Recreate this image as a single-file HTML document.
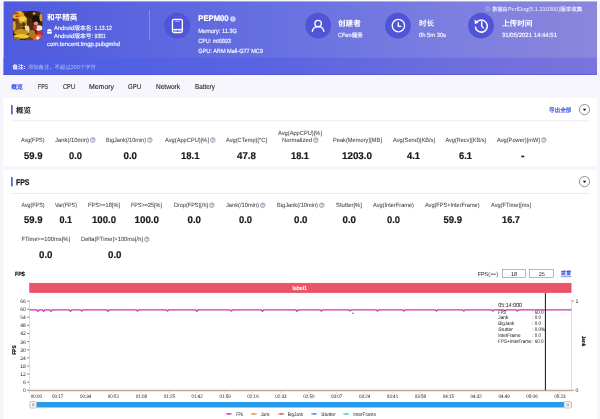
<!DOCTYPE html>
<html><head><meta charset="utf-8"><title>PerfDog</title>
<style>
html,body{margin:0;padding:0}
body{width:600px;height:419px;overflow:hidden;background:#f5f5fb;font-family:"Liberation Sans","Noto Sans CJK SC",sans-serif}
svg{display:block;overflow:visible}
#root{position:absolute;left:0;top:0;will-change:transform;font-family:"Liberation Sans","Noto Sans CJK SC",sans-serif}
</style></head><body>
<svg id="root" width="600" height="419" viewBox="0 0 600 419" text-rendering="geometricPrecision">
<svg x="0" y="0" width="600" height="419" viewBox="0 0 600 419"><defs><linearGradient id="hg" x1="0" x2="1" y1="0" y2="0"><stop offset="0" stop-color="#4f5ade"/><stop offset="0.45" stop-color="#6670e0"/><stop offset="0.75" stop-color="#7c7ee0"/><stop offset="1" stop-color="#8c86dc"/></linearGradient><linearGradient id="ng" x1="0" x2="1" y1="0" y2="0"><stop offset="0" stop-color="#4c5de4"/><stop offset="0.45" stop-color="#5a64e2"/><stop offset="0.75" stop-color="#6c6ede"/><stop offset="1" stop-color="#7a74dc"/></linearGradient><clipPath id="ic"><rect x="0" y="0" width="29.8" height="29.3" rx="6.2"/></clipPath><filter id="ib" x="-20%" y="-20%" width="140%" height="140%"><feGaussianBlur stdDeviation="0.7"/></filter></defs><rect x="0" y="0" width="600" height="2" fill="#fafafd"/><rect x="3.6" y="1.4" width="593.4" height="73.6" fill="url(#hg)"/><rect x="3.6" y="57.8" width="593.4" height="17.2" fill="url(#ng)"/><rect x="3.6" y="73.9" width="593.4" height="1.1" fill="#4a4adc" fill-opacity="0.45"/><rect x="3.6" y="75" width="593.4" height="22.9" fill="#f6f6fc"/><rect x="3.4" y="97.6" width="593.6" height="68.7" fill="#fff"/><rect x="3.4" y="169.6" width="593.6" height="250" fill="#fff"/><rect x="11" y="120.4" width="579" height="0.8" fill="#e6e6ee"/><rect x="11" y="193.1" width="579" height="0.8" fill="#e6e6ee"/><rect x="11.1" y="105.1" width="1.55" height="9.2" fill="#3350e6"/><rect x="11.1" y="177.1" width="1.55" height="9.2" fill="#3350e6"/><rect x="149.2" y="10" width="0.8" height="30" fill="#8f95ea"/><circle cx="177.2" cy="25.7" r="12.9" fill="#5054d6"/><circle cx="318.2" cy="25.7" r="12.9" fill="#5054d6"/><circle cx="397.9" cy="25.7" r="12.9" fill="#5054d6"/><circle cx="481" cy="25.7" r="12.9" fill="#5054d6"/><g transform="translate(12.6 10.9)" clip-path="url(#ic)"><rect x="0" y="0" width="30" height="29.4" fill="#4a2a12"/><g filter="url(#ib)"><ellipse cx="5" cy="4" rx="6.5" ry="4.5" fill="#e2aa1c"/><ellipse cx="3" cy="2.6" rx="3.2" ry="1.0" fill="#c8301c"/><ellipse cx="6.5" cy="5.4" rx="3.6" ry="0.9" fill="#c8301c"/><ellipse cx="9.5" cy="11" rx="6" ry="7" fill="#d8a222"/><ellipse cx="4" cy="11" rx="2.2" ry="3.4" fill="#6a4212"/><ellipse cx="6" cy="16" rx="3.2" ry="4.5" fill="#7a4e16"/><ellipse cx="10" cy="8" rx="3.2" ry="2.4" fill="#f4d44c"/><ellipse cx="11" cy="13.5" rx="2.2" ry="2.2" fill="#5a3414"/><ellipse cx="1.6" cy="15" rx="1.6" ry="5" fill="#dca21c"/><ellipse cx="18.5" cy="4" rx="6" ry="4.2" fill="#341a0e"/><ellipse cx="21.5" cy="2.6" rx="1.5" ry="1.3" fill="#d8a040"/><ellipse cx="17" cy="11.5" rx="3" ry="4.5" fill="#4e2c12"/><ellipse cx="24" cy="8.6" rx="4.6" ry="4" fill="#1c1010"/><ellipse cx="23.4" cy="12.6" rx="2.1" ry="2.1" fill="#d8987c"/><ellipse cx="28.6" cy="6.5" rx="1.7" ry="4" fill="#d4a028"/><ellipse cx="28.8" cy="13" rx="1.4" ry="2.5" fill="#3a2014"/><ellipse cx="26.4" cy="17.2" rx="3.6" ry="2.8" fill="#f2e6e6"/><ellipse cx="22.4" cy="16.6" rx="2.0" ry="2.4" fill="#c8242a"/><ellipse cx="27.6" cy="22" rx="3" ry="2.4" fill="#d4282a"/><ellipse cx="14.2" cy="18.5" rx="2.8" ry="4" fill="#ecdca4"/><ellipse cx="11" cy="18" rx="1.6" ry="2.6" fill="#4a2c12"/><ellipse cx="8.5" cy="21.4" rx="7" ry="3.2" fill="#c8921e"/><ellipse cx="9" cy="25.4" rx="7.8" ry="2.3" fill="#f2c826"/><ellipse cx="3.5" cy="27.8" rx="4" ry="1.8" fill="#a87014"/><ellipse cx="19.5" cy="23" rx="3.4" ry="4" fill="#a87a26"/><ellipse cx="25" cy="27" rx="5.6" ry="3.6" fill="#ee5a22"/><ellipse cx="25.2" cy="27" rx="1.7" ry="1.7" fill="#ffeadc"/><ellipse cx="16.5" cy="28.4" rx="4" ry="1.5" fill="#6e4214"/></g></g><rect x="29.6" y="283.2" width="541.5" height="9.5" fill="#ea5466" stroke="#e43c58" stroke-width="0.5"/></svg>
<text x="47.00" y="20.09" font-size="7.60" fill="#ffffff" textLength="30.40" lengthAdjust="spacingAndGlyphs" font-weight="700" font-family="'Liberation Sans','Noto Sans CJK SC',sans-serif">和平精英</text>
<svg x="46.9" y="28.7" width="5.1" height="5.3" viewBox="0 0 10 10"><path d="M0.4 4.5 A4.6 4.3 0 0 1 9.6 4.5 Z M0.4 5.4 H9.6 V8.2 Q9.6 9.7 8.1 9.7 H1.9 Q0.4 9.7 0.4 8.2 Z" fill="#fff"/></svg>
<text x="54.00" y="30.15" font-size="6.00" fill="#f6f6ff" textLength="20.00" lengthAdjust="spacingAndGlyphs" stroke="#f6f6ff" stroke-width="0.17">Android</text>
<text x="74.20" y="30.20" font-size="5.80" fill="#f6f6ff" textLength="17.30" lengthAdjust="spacingAndGlyphs" stroke="#f6f6ff" stroke-width="0.15" font-family="'Liberation Sans','Noto Sans CJK SC',sans-serif">版本名</text>
<text x="91.70" y="30.15" font-size="6.00" fill="#f6f6ff" textLength="20.30" lengthAdjust="spacingAndGlyphs" stroke="#f6f6ff" stroke-width="0.17">: 1.13.12</text>
<text x="54.00" y="37.95" font-size="6.00" fill="#f6f6ff" textLength="20.00" lengthAdjust="spacingAndGlyphs" stroke="#f6f6ff" stroke-width="0.17">Android</text>
<text x="74.20" y="38.00" font-size="5.80" fill="#f6f6ff" textLength="17.30" lengthAdjust="spacingAndGlyphs" stroke="#f6f6ff" stroke-width="0.15" font-family="'Liberation Sans','Noto Sans CJK SC',sans-serif">版本号</text>
<text x="91.70" y="37.95" font-size="6.00" fill="#f6f6ff" textLength="14.30" lengthAdjust="spacingAndGlyphs" stroke="#f6f6ff" stroke-width="0.17">: 9351</text>
<text x="47.00" y="46.35" font-size="6.00" fill="#f6f6ff" textLength="73.00" lengthAdjust="spacingAndGlyphs" stroke="#f6f6ff" stroke-width="0.17">com.tencent.tmgp.pubgmhd</text>
<text x="12.40" y="68.73" font-size="5.60" fill="#ffffff" textLength="11.00" lengthAdjust="spacingAndGlyphs" font-weight="700" font-family="'Liberation Sans','Noto Sans CJK SC',sans-serif">备注</text>
<text x="23.60" y="68.80" font-size="5.60" fill="#ffffff" textLength="1.87" lengthAdjust="spacingAndGlyphs" font-weight="700" stroke="#ffffff" stroke-width="0.17">:</text>
<text x="28.00" y="68.65" font-size="5.40" fill="#b4baf5" textLength="42.50" lengthAdjust="spacingAndGlyphs" font-family="'Liberation Sans','Noto Sans CJK SC',sans-serif">添加备注，不超过</text>
<text x="70.50" y="68.90" font-size="5.60" fill="#b4baf5" textLength="9.34" lengthAdjust="spacingAndGlyphs">200</text>
<text x="80.04" y="68.65" font-size="5.40" fill="#b4baf5" textLength="16.00" lengthAdjust="spacingAndGlyphs" font-family="'Liberation Sans','Noto Sans CJK SC',sans-serif">个字符</text>
<svg x="171.4" y="18.4" width="12" height="15" viewBox="0 0 12 15"><rect x="1.05" y="0.95" width="9.9" height="13.2" rx="1.7" fill="none" stroke="#fff" stroke-width="1.35"/><path d="M3.6 2.75 H8.4" stroke="#dfe1fb" stroke-width="0.8"/><path d="M1 11.0 H11" stroke="#fff" stroke-width="1.1"/><path d="M2.6 12.55 H5.5 M6.5 12.55 H9.4" stroke="#fff" stroke-width="0.9"/></svg>
<text x="198.30" y="21.17" font-size="8.30" fill="#ffffff" textLength="30.30" lengthAdjust="spacingAndGlyphs" font-weight="700" stroke="#ffffff" stroke-width="0.20">PEPM00</text>
<svg x="230.1" y="16.1" width="5.6" height="5.6" viewBox="0 0 10 10"><circle cx="5" cy="5" r="4.9" fill="#cfd1f8"/><path d="M5 4.4 V7.6" stroke="#6f76de" stroke-width="1.1"/><circle cx="5" cy="2.8" r=".7" fill="#6f76de"/></svg>
<text x="198.30" y="32.55" font-size="6.00" fill="#f6f6ff" textLength="38.70" lengthAdjust="spacingAndGlyphs" stroke="#f6f6ff" stroke-width="0.17">Memory: 11.3G</text>
<text x="198.30" y="42.85" font-size="6.00" fill="#f6f6ff" textLength="32.70" lengthAdjust="spacingAndGlyphs" stroke="#f6f6ff" stroke-width="0.17">CPU: mt6893</text>
<text x="198.30" y="53.15" font-size="6.00" fill="#f6f6ff" textLength="64.70" lengthAdjust="spacingAndGlyphs" stroke="#f6f6ff" stroke-width="0.17">GPU: ARM Mali-G77 MC9</text>
<svg x="311" y="19" width="14" height="14" viewBox="0 0 14 14"><circle cx="7.1" cy="4.5" r="3.2" fill="none" stroke="#fff" stroke-width="1.35"/><path d="M1.3 12.4 Q2.2 7.6 7.1 7.6 Q12 7.6 12.9 12.4" fill="none" stroke="#fff" stroke-width="1.35" stroke-linecap="round"/></svg>
<text x="338.00" y="25.89" font-size="7.60" fill="#ffffff" textLength="22.80" lengthAdjust="spacingAndGlyphs" font-weight="700" font-family="'Liberation Sans','Noto Sans CJK SC',sans-serif">创建者</text>
<text x="338.00" y="37.35" font-size="6.00" fill="#f6f6ff" textLength="13.50" lengthAdjust="spacingAndGlyphs" stroke="#f6f6ff" stroke-width="0.17">CFan</text>
<text x="351.70" y="37.33" font-size="5.60" fill="#f6f6ff" textLength="11.20" lengthAdjust="spacingAndGlyphs" stroke="#f6f6ff" stroke-width="0.15" font-family="'Liberation Sans','Noto Sans CJK SC',sans-serif">健圣</text>
<svg x="391" y="18.6" width="15" height="15" viewBox="0 0 15 15"><circle cx="7.4" cy="7.0" r="6.2" fill="none" stroke="#fff" stroke-width="1.35"/><path d="M7.3 3.6 V7.7 H10.4" fill="none" stroke="#fff" stroke-width="1.35"/></svg>
<text x="419.00" y="25.89" font-size="7.60" fill="#ffffff" textLength="15.20" lengthAdjust="spacingAndGlyphs" font-weight="700" font-family="'Liberation Sans','Noto Sans CJK SC',sans-serif">时长</text>
<text x="419.00" y="37.35" font-size="6.00" fill="#f6f6ff" textLength="27.00" lengthAdjust="spacingAndGlyphs" stroke="#f6f6ff" stroke-width="0.17">0h 5m 30s</text>
<svg x="473" y="18" width="16" height="16" viewBox="0 0 16 16"><path d="M3.4 4.6 A6 6 0 1 1 2.3 8.6" fill="none" stroke="#fff" stroke-width="1.5"/><path d="M1.6 1.6 L5.6 4.6 L1.8 6.2 Z" fill="#fff"/><path d="M8.7 3.8 V8.0 L10.2 9.9" fill="none" stroke="#fff" stroke-width="1.4" stroke-linecap="round"/></svg>
<text x="502.00" y="26.29" font-size="7.60" fill="#ffffff" textLength="30.40" lengthAdjust="spacingAndGlyphs" font-weight="700" font-family="'Liberation Sans','Noto Sans CJK SC',sans-serif">上传时间</text>
<text x="502.00" y="37.35" font-size="6.00" fill="#f6f6ff" textLength="55.00" lengthAdjust="spacingAndGlyphs" stroke="#f6f6ff" stroke-width="0.17">31/05/2021 14:44:51</text>
<svg x="485.4" y="6.4" width="4.8" height="4.8" viewBox="0 0 10 10"><circle cx="5" cy="5" r="4.3" fill="none" stroke="#d9dbf7" stroke-width="0.9"/><path d="M5 4.3 V7.4" stroke="#d9dbf7" stroke-width="1"/><circle cx="5" cy="2.9" r=".7" fill="#d9dbf7"/></svg>
<text x="492.60" y="10.98" font-size="5.20" fill="#f2f2fe" textLength="15.00" lengthAdjust="spacingAndGlyphs" stroke="#f2f2fe" stroke-width="0.10" font-family="'Liberation Sans','Noto Sans CJK SC',sans-serif">数据由</text>
<text x="507.80" y="11.08" font-size="5.80" fill="#f2f2fe" textLength="52.20" lengthAdjust="spacingAndGlyphs">PerfDog(5.1.210300)</text>
<text x="560.20" y="11.05" font-size="5.40" fill="#f2f2fe" textLength="22.20" lengthAdjust="spacingAndGlyphs" stroke="#f2f2fe" stroke-width="0.10" font-family="'Liberation Sans','Noto Sans CJK SC',sans-serif">版本收集</text>
<text x="11.20" y="88.84" font-size="5.90" fill="#3553e2" textLength="11.60" lengthAdjust="spacingAndGlyphs" stroke="#3553e2" stroke-width="0.22" font-family="'Liberation Sans','Noto Sans CJK SC',sans-serif">概览</text>
<text x="38.00" y="89.14" font-size="7.10" fill="#2a2a2a" textLength="10.00" lengthAdjust="spacingAndGlyphs" stroke="#2a2a2a" stroke-width="0.12">FPS</text>
<text x="63.00" y="89.14" font-size="7.10" fill="#2a2a2a" textLength="12.00" lengthAdjust="spacingAndGlyphs" stroke="#2a2a2a" stroke-width="0.12">CPU</text>
<text x="89.00" y="89.14" font-size="7.10" fill="#2a2a2a" textLength="25.00" lengthAdjust="spacingAndGlyphs" stroke="#2a2a2a" stroke-width="0.12">Memory</text>
<text x="128.00" y="89.14" font-size="7.10" fill="#2a2a2a" textLength="13.00" lengthAdjust="spacingAndGlyphs" stroke="#2a2a2a" stroke-width="0.12">GPU</text>
<text x="156.00" y="89.14" font-size="7.10" fill="#2a2a2a" textLength="24.00" lengthAdjust="spacingAndGlyphs" stroke="#2a2a2a" stroke-width="0.12">Network</text>
<text x="195.00" y="89.14" font-size="7.10" fill="#2a2a2a" textLength="20.00" lengthAdjust="spacingAndGlyphs" stroke="#2a2a2a" stroke-width="0.12">Battery</text>
<text x="16.00" y="112.89" font-size="7.60" fill="#1a1a1a" textLength="15.00" lengthAdjust="spacingAndGlyphs" font-weight="700" font-family="'Liberation Sans','Noto Sans CJK SC',sans-serif">概览</text>
<text x="549.00" y="111.73" font-size="5.60" fill="#3553e2" textLength="22.40" lengthAdjust="spacingAndGlyphs" stroke="#3553e2" stroke-width="0.20" font-family="'Liberation Sans','Noto Sans CJK SC',sans-serif">导出全部</text>
<svg x="578.50" y="103.60" width="12" height="12" viewBox="0 0 12 12"><circle cx="6" cy="6" r="5.1" fill="#fff" stroke="#444" stroke-width="0.6"/><path d="M4.3 5.2 H7.7 L6 7.4 Z" fill="#111"/></svg>
<svg x="578.50" y="175.60" width="12" height="12" viewBox="0 0 12 12"><circle cx="6" cy="6" r="5.1" fill="#fff" stroke="#444" stroke-width="0.6"/><path d="M4.3 5.2 H7.7 L6 7.4 Z" fill="#111"/></svg>
<text x="21.00" y="142.15" font-size="6.00" fill="#444444" textLength="23.50" lengthAdjust="spacingAndGlyphs" stroke="#444444" stroke-width="0.05">Avg(FPS)</text>
<text x="24.00" y="158.51" font-size="9.80" fill="#1a1a1a" textLength="18.50" lengthAdjust="spacingAndGlyphs" font-weight="700" stroke="#1a1a1a" stroke-width="0.20">59.9</text>
<text x="55.00" y="142.15" font-size="6.00" fill="#444444" textLength="34.00" lengthAdjust="spacingAndGlyphs" stroke="#444444" stroke-width="0.05">Jank(/10min)</text>
<svg x="90.00" y="137.20" width="5.60" height="5.60" viewBox="0 0 12 12"><circle cx="6" cy="6" r="4.9" fill="none" stroke="#6a7a9e" stroke-width="1.5"/><path d="M4.2 4.9 Q4.2 3.1 6 3.1 Q7.8 3.1 7.8 4.6 Q7.8 5.5 6 6.3 V7.3" fill="none" stroke="#6a7a9e" stroke-width="1.4"/><circle cx="6" cy="8.9" r=".9" fill="#6a7a9e"/></svg>
<text x="69.00" y="158.51" font-size="9.80" fill="#1a1a1a" textLength="13.00" lengthAdjust="spacingAndGlyphs" font-weight="700" stroke="#1a1a1a" stroke-width="0.20">0.0</text>
<text x="106.00" y="142.15" font-size="6.00" fill="#444444" textLength="40.00" lengthAdjust="spacingAndGlyphs" stroke="#444444" stroke-width="0.05">BigJank(/10min)</text>
<svg x="147.00" y="137.20" width="5.60" height="5.60" viewBox="0 0 12 12"><circle cx="6" cy="6" r="4.9" fill="none" stroke="#6a7a9e" stroke-width="1.5"/><path d="M4.2 4.9 Q4.2 3.1 6 3.1 Q7.8 3.1 7.8 4.6 Q7.8 5.5 6 6.3 V7.3" fill="none" stroke="#6a7a9e" stroke-width="1.4"/><circle cx="6" cy="8.9" r=".9" fill="#6a7a9e"/></svg>
<text x="123.50" y="158.51" font-size="9.80" fill="#1a1a1a" textLength="13.50" lengthAdjust="spacingAndGlyphs" font-weight="700" stroke="#1a1a1a" stroke-width="0.20">0.0</text>
<text x="165.00" y="142.15" font-size="6.00" fill="#444444" textLength="44.00" lengthAdjust="spacingAndGlyphs" stroke="#444444" stroke-width="0.05">Avg(AppCPU)[%]</text>
<svg x="210.00" y="137.20" width="5.60" height="5.60" viewBox="0 0 12 12"><circle cx="6" cy="6" r="4.9" fill="none" stroke="#6a7a9e" stroke-width="1.5"/><path d="M4.2 4.9 Q4.2 3.1 6 3.1 Q7.8 3.1 7.8 4.6 Q7.8 5.5 6 6.3 V7.3" fill="none" stroke="#6a7a9e" stroke-width="1.4"/><circle cx="6" cy="8.9" r=".9" fill="#6a7a9e"/></svg>
<text x="181.00" y="158.51" font-size="9.80" fill="#1a1a1a" textLength="18.50" lengthAdjust="spacingAndGlyphs" font-weight="700" stroke="#1a1a1a" stroke-width="0.20">18.1</text>
<text x="226.00" y="142.15" font-size="6.00" fill="#444444" textLength="41.00" lengthAdjust="spacingAndGlyphs" stroke="#444444" stroke-width="0.05">Avg(CTemp)[°C]</text>
<text x="237.00" y="158.51" font-size="9.80" fill="#1a1a1a" textLength="19.00" lengthAdjust="spacingAndGlyphs" font-weight="700" stroke="#1a1a1a" stroke-width="0.20">47.8</text>
<text x="278.00" y="135.15" font-size="6.00" fill="#444444" textLength="44.00" lengthAdjust="spacingAndGlyphs" stroke="#444444" stroke-width="0.05">Avg(AppCPU)[%]</text>
<text x="282.00" y="142.25" font-size="6.00" fill="#444444" textLength="30.00" lengthAdjust="spacingAndGlyphs" stroke="#444444" stroke-width="0.05">Normalized</text>
<svg x="313.00" y="137.30" width="5.60" height="5.60" viewBox="0 0 12 12"><circle cx="6" cy="6" r="4.9" fill="none" stroke="#6a7a9e" stroke-width="1.5"/><path d="M4.2 4.9 Q4.2 3.1 6 3.1 Q7.8 3.1 7.8 4.6 Q7.8 5.5 6 6.3 V7.3" fill="none" stroke="#6a7a9e" stroke-width="1.4"/><circle cx="6" cy="8.9" r=".9" fill="#6a7a9e"/></svg>
<text x="291.00" y="158.51" font-size="9.80" fill="#1a1a1a" textLength="18.00" lengthAdjust="spacingAndGlyphs" font-weight="700" stroke="#1a1a1a" stroke-width="0.20">18.1</text>
<text x="333.00" y="142.15" font-size="6.00" fill="#444444" textLength="49.00" lengthAdjust="spacingAndGlyphs" stroke="#444444" stroke-width="0.05">Peak(Memory)[MB]</text>
<text x="342.00" y="158.51" font-size="9.80" fill="#1a1a1a" textLength="30.00" lengthAdjust="spacingAndGlyphs" font-weight="700" stroke="#1a1a1a" stroke-width="0.20">1203.0</text>
<text x="393.00" y="142.15" font-size="6.00" fill="#444444" textLength="42.00" lengthAdjust="spacingAndGlyphs" stroke="#444444" stroke-width="0.05">Avg(Send)[KB/s]</text>
<text x="407.00" y="158.51" font-size="9.80" fill="#1a1a1a" textLength="13.00" lengthAdjust="spacingAndGlyphs" font-weight="700" stroke="#1a1a1a" stroke-width="0.20">4.1</text>
<text x="445.50" y="142.15" font-size="6.00" fill="#444444" textLength="40.50" lengthAdjust="spacingAndGlyphs" stroke="#444444" stroke-width="0.05">Avg(Recv)[KB/s]</text>
<text x="459.00" y="158.51" font-size="9.80" fill="#1a1a1a" textLength="13.00" lengthAdjust="spacingAndGlyphs" font-weight="700" stroke="#1a1a1a" stroke-width="0.20">6.1</text>
<text x="497.00" y="142.15" font-size="6.00" fill="#444444" textLength="43.00" lengthAdjust="spacingAndGlyphs" stroke="#444444" stroke-width="0.05">Avg(Power)[mW]</text>
<svg x="541.00" y="137.20" width="5.60" height="5.60" viewBox="0 0 12 12"><circle cx="6" cy="6" r="4.9" fill="none" stroke="#6a7a9e" stroke-width="1.5"/><path d="M4.2 4.9 Q4.2 3.1 6 3.1 Q7.8 3.1 7.8 4.6 Q7.8 5.5 6 6.3 V7.3" fill="none" stroke="#6a7a9e" stroke-width="1.4"/><circle cx="6" cy="8.9" r=".9" fill="#6a7a9e"/></svg>
<text x="521.00" y="158.51" font-size="9.80" fill="#1a1a1a" textLength="3.50" lengthAdjust="spacingAndGlyphs" font-weight="700" stroke="#1a1a1a" stroke-width="0.20">-</text>
<text x="16.00" y="184.77" font-size="8.30" fill="#1a1a1a" textLength="13.50" lengthAdjust="spacingAndGlyphs" font-weight="700" stroke="#1a1a1a" stroke-width="0.25">FPS</text>
<text x="21.50" y="207.35" font-size="6.00" fill="#444444" textLength="23.00" lengthAdjust="spacingAndGlyphs" stroke="#444444" stroke-width="0.05">Avg(FPS)</text>
<text x="24.00" y="223.21" font-size="9.80" fill="#1a1a1a" textLength="18.50" lengthAdjust="spacingAndGlyphs" font-weight="700" stroke="#1a1a1a" stroke-width="0.20">59.9</text>
<text x="55.00" y="207.35" font-size="6.00" fill="#444444" textLength="22.00" lengthAdjust="spacingAndGlyphs" stroke="#444444" stroke-width="0.05">Var(FPS)</text>
<text x="59.50" y="223.21" font-size="9.80" fill="#1a1a1a" textLength="12.50" lengthAdjust="spacingAndGlyphs" font-weight="700" stroke="#1a1a1a" stroke-width="0.20">0.1</text>
<text x="88.00" y="207.35" font-size="6.00" fill="#444444" textLength="32.00" lengthAdjust="spacingAndGlyphs" stroke="#444444" stroke-width="0.05">FPS&gt;=18[%]</text>
<text x="92.00" y="223.21" font-size="9.80" fill="#1a1a1a" textLength="24.00" lengthAdjust="spacingAndGlyphs" font-weight="700" stroke="#1a1a1a" stroke-width="0.20">100.0</text>
<text x="131.00" y="207.35" font-size="6.00" fill="#444444" textLength="31.00" lengthAdjust="spacingAndGlyphs" stroke="#444444" stroke-width="0.05">FPS&gt;=25[%]</text>
<text x="134.50" y="223.21" font-size="9.80" fill="#1a1a1a" textLength="24.50" lengthAdjust="spacingAndGlyphs" font-weight="700" stroke="#1a1a1a" stroke-width="0.20">100.0</text>
<text x="174.00" y="207.35" font-size="6.00" fill="#444444" textLength="34.00" lengthAdjust="spacingAndGlyphs" stroke="#444444" stroke-width="0.05">Drop(FPS)[/h]</text>
<svg x="209.00" y="202.40" width="5.60" height="5.60" viewBox="0 0 12 12"><circle cx="6" cy="6" r="4.9" fill="none" stroke="#6a7a9e" stroke-width="1.5"/><path d="M4.2 4.9 Q4.2 3.1 6 3.1 Q7.8 3.1 7.8 4.6 Q7.8 5.5 6 6.3 V7.3" fill="none" stroke="#6a7a9e" stroke-width="1.4"/><circle cx="6" cy="8.9" r=".9" fill="#6a7a9e"/></svg>
<text x="187.50" y="223.21" font-size="9.80" fill="#1a1a1a" textLength="13.50" lengthAdjust="spacingAndGlyphs" font-weight="700" stroke="#1a1a1a" stroke-width="0.20">0.0</text>
<text x="226.00" y="207.35" font-size="6.00" fill="#444444" textLength="33.00" lengthAdjust="spacingAndGlyphs" stroke="#444444" stroke-width="0.05">Jank(/10min)</text>
<svg x="260.00" y="202.40" width="5.60" height="5.60" viewBox="0 0 12 12"><circle cx="6" cy="6" r="4.9" fill="none" stroke="#6a7a9e" stroke-width="1.5"/><path d="M4.2 4.9 Q4.2 3.1 6 3.1 Q7.8 3.1 7.8 4.6 Q7.8 5.5 6 6.3 V7.3" fill="none" stroke="#6a7a9e" stroke-width="1.4"/><circle cx="6" cy="8.9" r=".9" fill="#6a7a9e"/></svg>
<text x="239.00" y="223.21" font-size="9.80" fill="#1a1a1a" textLength="13.00" lengthAdjust="spacingAndGlyphs" font-weight="700" stroke="#1a1a1a" stroke-width="0.20">0.0</text>
<text x="277.00" y="207.35" font-size="6.00" fill="#444444" textLength="41.00" lengthAdjust="spacingAndGlyphs" stroke="#444444" stroke-width="0.05">BigJank(/10min)</text>
<svg x="319.00" y="202.40" width="5.60" height="5.60" viewBox="0 0 12 12"><circle cx="6" cy="6" r="4.9" fill="none" stroke="#6a7a9e" stroke-width="1.5"/><path d="M4.2 4.9 Q4.2 3.1 6 3.1 Q7.8 3.1 7.8 4.6 Q7.8 5.5 6 6.3 V7.3" fill="none" stroke="#6a7a9e" stroke-width="1.4"/><circle cx="6" cy="8.9" r=".9" fill="#6a7a9e"/></svg>
<text x="294.00" y="223.21" font-size="9.80" fill="#1a1a1a" textLength="13.50" lengthAdjust="spacingAndGlyphs" font-weight="700" stroke="#1a1a1a" stroke-width="0.20">0.0</text>
<text x="336.00" y="207.35" font-size="6.00" fill="#444444" textLength="26.00" lengthAdjust="spacingAndGlyphs" stroke="#444444" stroke-width="0.05">Stutter[%]</text>
<text x="342.50" y="223.21" font-size="9.80" fill="#1a1a1a" textLength="13.50" lengthAdjust="spacingAndGlyphs" font-weight="700" stroke="#1a1a1a" stroke-width="0.20">0.0</text>
<text x="373.00" y="207.35" font-size="6.00" fill="#444444" textLength="41.00" lengthAdjust="spacingAndGlyphs" stroke="#444444" stroke-width="0.05">Avg(InterFrame)</text>
<text x="387.00" y="223.21" font-size="9.80" fill="#1a1a1a" textLength="13.00" lengthAdjust="spacingAndGlyphs" font-weight="700" stroke="#1a1a1a" stroke-width="0.20">0.0</text>
<text x="425.00" y="207.35" font-size="6.00" fill="#444444" textLength="54.50" lengthAdjust="spacingAndGlyphs" stroke="#444444" stroke-width="0.05">Avg(FPS+InterFrame)</text>
<text x="443.50" y="223.21" font-size="9.80" fill="#1a1a1a" textLength="18.50" lengthAdjust="spacingAndGlyphs" font-weight="700" stroke="#1a1a1a" stroke-width="0.20">59.9</text>
<text x="491.00" y="207.35" font-size="6.00" fill="#444444" textLength="40.00" lengthAdjust="spacingAndGlyphs" stroke="#444444" stroke-width="0.05">Avg(FTime)[ms]</text>
<text x="502.00" y="223.21" font-size="9.80" fill="#1a1a1a" textLength="18.00" lengthAdjust="spacingAndGlyphs" font-weight="700" stroke="#1a1a1a" stroke-width="0.20">16.7</text>
<text x="21.50" y="241.45" font-size="6.00" fill="#444444" textLength="48.50" lengthAdjust="spacingAndGlyphs" stroke="#444444" stroke-width="0.05">FTime&gt;=100ms[%]</text>
<text x="39.00" y="257.91" font-size="9.80" fill="#1a1a1a" textLength="13.50" lengthAdjust="spacingAndGlyphs" font-weight="700" stroke="#1a1a1a" stroke-width="0.20">0.0</text>
<text x="81.00" y="241.45" font-size="6.00" fill="#444444" textLength="62.00" lengthAdjust="spacingAndGlyphs" stroke="#444444" stroke-width="0.05">Delta(FTime)&gt;100ms[/h]</text>
<svg x="144.00" y="236.50" width="5.60" height="5.60" viewBox="0 0 12 12"><circle cx="6" cy="6" r="4.9" fill="none" stroke="#6a7a9e" stroke-width="1.5"/><path d="M4.2 4.9 Q4.2 3.1 6 3.1 Q7.8 3.1 7.8 4.6 Q7.8 5.5 6 6.3 V7.3" fill="none" stroke="#6a7a9e" stroke-width="1.4"/><circle cx="6" cy="8.9" r=".9" fill="#6a7a9e"/></svg>
<text x="108.00" y="257.91" font-size="9.80" fill="#1a1a1a" textLength="13.50" lengthAdjust="spacingAndGlyphs" font-weight="700" stroke="#1a1a1a" stroke-width="0.20">0.0</text>
<text x="15.00" y="276.45" font-size="6.00" fill="#000" textLength="10.00" lengthAdjust="spacingAndGlyphs" font-weight="700" stroke="#000" stroke-width="0.15">FPS</text>
<text x="477.70" y="275.68" font-size="5.80" fill="#222" textLength="20.30" lengthAdjust="spacingAndGlyphs">FPS(&gt;=)</text>
<svg x="0" y="0" width="600" height="419" viewBox="0 0 600 419"><rect x="502.4" y="269.6" width="23.3" height="8" fill="#fff" stroke="#7d7d7d" stroke-width="0.55"/><rect x="529.7" y="269.6" width="24" height="8" fill="#fff" stroke="#7d7d7d" stroke-width="0.55"/></svg>
<text x="510.89" y="275.60" font-size="5.60" fill="#222" textLength="6.23" lengthAdjust="spacingAndGlyphs">18</text>
<text x="538.69" y="275.60" font-size="5.60" fill="#222" textLength="6.23" lengthAdjust="spacingAndGlyphs">25</text>
<text x="560.80" y="275.48" font-size="5.20" fill="#3553e2" textLength="10.40" lengthAdjust="spacingAndGlyphs" stroke="#3553e2" stroke-width="0.15" font-family="'Liberation Sans','Noto Sans CJK SC',sans-serif">重置</text>
<rect x="560.8" y="276.5" width="10.4" height="0.6" fill="#3553e2"/>
<text x="292.50" y="289.74" font-size="5.70" fill="#ffffff" textLength="14.60" lengthAdjust="spacingAndGlyphs" stroke="#ffffff" stroke-width="0.17">label1</text>
<svg x="0" y="0" width="600" height="419" viewBox="0 0 600 419"><path d="M29.50 300.59 V390.30" stroke="#ccd0d8" stroke-width="0.7"/><path d="M27.20 390.30 H29.20" stroke="#444" stroke-width="0.7"/><path d="M27.20 382.19 H29.20" stroke="#444" stroke-width="0.7"/><path d="M27.20 374.08 H29.20" stroke="#444" stroke-width="0.7"/><path d="M27.20 365.97 H29.20" stroke="#444" stroke-width="0.7"/><path d="M27.20 357.86 H29.20" stroke="#444" stroke-width="0.7"/><path d="M27.20 349.75 H29.20" stroke="#444" stroke-width="0.7"/><path d="M27.20 341.64 H29.20" stroke="#444" stroke-width="0.7"/><path d="M27.20 333.53 H29.20" stroke="#444" stroke-width="0.7"/><path d="M27.20 325.42 H29.20" stroke="#444" stroke-width="0.7"/><path d="M27.20 317.31 H29.20" stroke="#444" stroke-width="0.7"/><path d="M27.20 309.20 H29.20" stroke="#444" stroke-width="0.7"/><path d="M27.20 301.09 H29.20" stroke="#444" stroke-width="0.7"/><path d="M571.50 300.59 V390.30" stroke="#ccd0d8" stroke-width="0.7"/><path d="M571.50 300.89 H573.90 M571.50 390.30 H573.90" stroke="#444" stroke-width="0.6"/><path d="M29.50 391.05 H571.50" stroke="#a8e2ea" stroke-width="0.8"/><path d="M29.50 390.30 H571.50" stroke="#c4875c" stroke-width="0.9"/><path d="M29.50 391.30 V393.10" stroke="#b5b5b5" stroke-width="0.6"/><path d="M57.40 391.30 V393.10" stroke="#b5b5b5" stroke-width="0.6"/><path d="M85.30 391.30 V393.10" stroke="#b5b5b5" stroke-width="0.6"/><path d="M113.20 391.30 V393.10" stroke="#b5b5b5" stroke-width="0.6"/><path d="M141.10 391.30 V393.10" stroke="#b5b5b5" stroke-width="0.6"/><path d="M169.00 391.30 V393.10" stroke="#b5b5b5" stroke-width="0.6"/><path d="M196.90 391.30 V393.10" stroke="#b5b5b5" stroke-width="0.6"/><path d="M224.80 391.30 V393.10" stroke="#b5b5b5" stroke-width="0.6"/><path d="M252.70 391.30 V393.10" stroke="#b5b5b5" stroke-width="0.6"/><path d="M280.60 391.30 V393.10" stroke="#b5b5b5" stroke-width="0.6"/><path d="M308.50 391.30 V393.10" stroke="#b5b5b5" stroke-width="0.6"/><path d="M336.40 391.30 V393.10" stroke="#b5b5b5" stroke-width="0.6"/><path d="M364.30 391.30 V393.10" stroke="#b5b5b5" stroke-width="0.6"/><path d="M392.20 391.30 V393.10" stroke="#b5b5b5" stroke-width="0.6"/><path d="M420.10 391.30 V393.10" stroke="#b5b5b5" stroke-width="0.6"/><path d="M448.00 391.30 V393.10" stroke="#b5b5b5" stroke-width="0.6"/><path d="M475.90 391.30 V393.10" stroke="#b5b5b5" stroke-width="0.6"/><path d="M503.80 391.30 V393.10" stroke="#b5b5b5" stroke-width="0.6"/><path d="M531.70 391.30 V393.10" stroke="#b5b5b5" stroke-width="0.6"/><path d="M559.60 391.30 V393.10" stroke="#b5b5b5" stroke-width="0.6"/><path d="M29.50 309.75 H36.60 L38.00 311.45 L39.40 309.75 H42.20 L43.60 311.45 L45.00 309.75 H49.60 L51.00 311.45 L52.40 309.75 H69.10 L70.50 311.35 L71.90 309.75 H80.40 L81.80 311.15 L83.20 309.75 H106.60 L108.00 311.25 L109.40 309.75 H136.10 L137.50 311.15 L138.90 309.75 H166.10 L167.50 311.15 L168.90 309.75 H195.40 L196.80 311.25 L198.20 309.75 H229.90 L231.30 311.15 L232.70 309.75 H261.10 L262.50 311.25 L263.90 309.75 H295.60 L297.00 311.25 L298.40 309.75 H319.90 L321.30 311.15 L322.70 309.75 H348.60 L350.00 310.95 L351.40 309.75 H376.10 L377.50 311.15 L378.90 309.75 H402.40 L403.80 311.15 L405.20 309.75 H435.10 L436.50 311.15 L437.90 309.75 H462.40 L463.80 311.15 L465.20 309.75 H491.40 L492.80 311.15 L494.20 309.75 H503.80 L505.20 310.95 L506.60 309.75 H515.90 L517.30 311.15 L518.70 309.75 H571.50" fill="none" stroke="#c835b6" stroke-width="1.25" stroke-linejoin="round"/><circle cx="353" cy="313.35" r="0.8" fill="#c532b4"/><path d="M545.4 293 V390.30" stroke="#111" stroke-width="1"/><rect x="30" y="402" width="541.4" height="5.4" rx="1" fill="#2a9aea"/><rect x="29.8" y="401.5" width="6.8" height="6.6" rx="1.2" fill="#f4f4f4" stroke="#9a9a9a" stroke-width="0.5"/><rect x="564" y="401.5" width="7.4" height="6.6" rx="1.2" fill="#f4f4f4" stroke="#9a9a9a" stroke-width="0.5"/><path d="M32.6 403.4 V406.2 M33.9 403.4 V406.2 M567.1 403.4 V406.2 M568.4 403.4 V406.2" stroke="#666" stroke-width="0.5"/><path d="M226.00 413.9 H231.70" stroke="#c532b4" stroke-width="1.1"/><circle cx="228.85" cy="413.9" r="0.9" fill="#c532b4"/><path d="M251.00 413.9 H256.70" stroke="#f08a24" stroke-width="1.1"/><circle cx="253.85" cy="413.9" r="0.9" fill="#f08a24"/><path d="M278.40 413.9 H284.10" stroke="#e8454f" stroke-width="1.1"/><circle cx="281.25" cy="413.9" r="0.9" fill="#e8454f"/><path d="M311.30 413.9 H317.00" stroke="#3d8bea" stroke-width="1.1"/><circle cx="314.15" cy="413.9" r="0.9" fill="#3d8bea"/><path d="M343.30 413.9 H349.00" stroke="#2fd0d8" stroke-width="1.1"/><circle cx="346.15" cy="413.9" r="0.9" fill="#2fd0d8"/></svg>
<text x="23.00" y="392.16" font-size="5.20" fill="#222" textLength="2.80" lengthAdjust="spacingAndGlyphs">0</text>
<text x="23.00" y="384.05" font-size="5.20" fill="#222" textLength="2.80" lengthAdjust="spacingAndGlyphs">6</text>
<text x="20.20" y="375.94" font-size="5.20" fill="#222" textLength="5.60" lengthAdjust="spacingAndGlyphs">12</text>
<text x="20.20" y="367.83" font-size="5.20" fill="#222" textLength="5.60" lengthAdjust="spacingAndGlyphs">18</text>
<text x="20.20" y="359.72" font-size="5.20" fill="#222" textLength="5.60" lengthAdjust="spacingAndGlyphs">24</text>
<text x="20.20" y="351.61" font-size="5.20" fill="#222" textLength="5.60" lengthAdjust="spacingAndGlyphs">30</text>
<text x="20.20" y="343.50" font-size="5.20" fill="#222" textLength="5.60" lengthAdjust="spacingAndGlyphs">36</text>
<text x="20.20" y="335.39" font-size="5.20" fill="#222" textLength="5.60" lengthAdjust="spacingAndGlyphs">42</text>
<text x="20.20" y="327.28" font-size="5.20" fill="#222" textLength="5.60" lengthAdjust="spacingAndGlyphs">48</text>
<text x="20.20" y="319.17" font-size="5.20" fill="#222" textLength="5.60" lengthAdjust="spacingAndGlyphs">54</text>
<text x="20.20" y="311.06" font-size="5.20" fill="#222" textLength="5.60" lengthAdjust="spacingAndGlyphs">60</text>
<text x="20.20" y="302.95" font-size="5.20" fill="#222" textLength="5.60" lengthAdjust="spacingAndGlyphs">66</text>
<text x="575.60" y="302.75" font-size="5.20" fill="#222" textLength="2.89" lengthAdjust="spacingAndGlyphs">1</text>
<text x="575.60" y="391.76" font-size="5.20" fill="#222" textLength="2.89" lengthAdjust="spacingAndGlyphs">0</text>
<text x="-4.60" y="1.93" font-size="5.40" fill="#000" textLength="9.20" lengthAdjust="spacingAndGlyphs" font-weight="700" stroke="#000" stroke-width="0.15" transform="translate(14.1 350) rotate(-90)">FPS</text>
<text x="-5.20" y="1.86" font-size="5.20" fill="#000" textLength="10.40" lengthAdjust="spacingAndGlyphs" font-weight="700" stroke="#000" stroke-width="0.12" transform="translate(583.8 341) rotate(90)">Jank</text>
<text x="30.65" y="398.23" font-size="5.10" fill="#222" textLength="11.30" lengthAdjust="spacingAndGlyphs">00:00</text>
<text x="52.05" y="398.23" font-size="5.10" fill="#222" textLength="11.30" lengthAdjust="spacingAndGlyphs">00:17</text>
<text x="79.95" y="398.23" font-size="5.10" fill="#222" textLength="11.30" lengthAdjust="spacingAndGlyphs">00:34</text>
<text x="107.85" y="398.23" font-size="5.10" fill="#222" textLength="11.30" lengthAdjust="spacingAndGlyphs">00:51</text>
<text x="135.75" y="398.23" font-size="5.10" fill="#222" textLength="11.30" lengthAdjust="spacingAndGlyphs">01:08</text>
<text x="163.65" y="398.23" font-size="5.10" fill="#222" textLength="11.30" lengthAdjust="spacingAndGlyphs">01:25</text>
<text x="191.55" y="398.23" font-size="5.10" fill="#222" textLength="11.30" lengthAdjust="spacingAndGlyphs">01:42</text>
<text x="219.45" y="398.23" font-size="5.10" fill="#222" textLength="11.30" lengthAdjust="spacingAndGlyphs">01:59</text>
<text x="247.35" y="398.23" font-size="5.10" fill="#222" textLength="11.30" lengthAdjust="spacingAndGlyphs">02:16</text>
<text x="275.25" y="398.23" font-size="5.10" fill="#222" textLength="11.30" lengthAdjust="spacingAndGlyphs">02:33</text>
<text x="303.15" y="398.23" font-size="5.10" fill="#222" textLength="11.30" lengthAdjust="spacingAndGlyphs">02:50</text>
<text x="331.05" y="398.23" font-size="5.10" fill="#222" textLength="11.30" lengthAdjust="spacingAndGlyphs">03:07</text>
<text x="358.95" y="398.23" font-size="5.10" fill="#222" textLength="11.30" lengthAdjust="spacingAndGlyphs">03:24</text>
<text x="386.85" y="398.23" font-size="5.10" fill="#222" textLength="11.30" lengthAdjust="spacingAndGlyphs">03:41</text>
<text x="414.75" y="398.23" font-size="5.10" fill="#222" textLength="11.30" lengthAdjust="spacingAndGlyphs">03:58</text>
<text x="442.65" y="398.23" font-size="5.10" fill="#222" textLength="11.30" lengthAdjust="spacingAndGlyphs">04:15</text>
<text x="470.55" y="398.23" font-size="5.10" fill="#222" textLength="11.30" lengthAdjust="spacingAndGlyphs">04:32</text>
<text x="498.45" y="398.23" font-size="5.10" fill="#222" textLength="11.30" lengthAdjust="spacingAndGlyphs">04:49</text>
<text x="526.35" y="398.23" font-size="5.10" fill="#222" textLength="11.30" lengthAdjust="spacingAndGlyphs">05:06</text>
<text x="554.25" y="398.23" font-size="5.10" fill="#222" textLength="11.30" lengthAdjust="spacingAndGlyphs">05:23</text>
<text x="498.30" y="307.35" font-size="6.00" fill="#111" textLength="23.80" lengthAdjust="spacingAndGlyphs">05:14:000</text>
<text x="498.30" y="313.56" font-size="5.20" fill="#111" textLength="7.70" lengthAdjust="spacingAndGlyphs">FPS</text>
<text x="532.20" y="313.56" font-size="5.20" fill="#111" textLength="11.40" lengthAdjust="spacingAndGlyphs">: 60.0</text>
<text x="498.30" y="319.41" font-size="5.20" fill="#111" textLength="10.00" lengthAdjust="spacingAndGlyphs">Jank</text>
<text x="532.20" y="319.41" font-size="5.20" fill="#111" textLength="8.80" lengthAdjust="spacingAndGlyphs">: 0.0</text>
<text x="498.30" y="325.26" font-size="5.20" fill="#111" textLength="16.10" lengthAdjust="spacingAndGlyphs">BigJank</text>
<text x="532.20" y="325.26" font-size="5.20" fill="#111" textLength="8.80" lengthAdjust="spacingAndGlyphs">: 0.0</text>
<text x="498.30" y="331.11" font-size="5.20" fill="#111" textLength="14.70" lengthAdjust="spacingAndGlyphs">Stutter</text>
<text x="532.20" y="331.11" font-size="5.20" fill="#111" textLength="13.00" lengthAdjust="spacingAndGlyphs">: 0.0%</text>
<text x="498.30" y="336.96" font-size="5.20" fill="#111" textLength="22.10" lengthAdjust="spacingAndGlyphs">InterFrame</text>
<text x="532.20" y="336.96" font-size="5.20" fill="#111" textLength="8.80" lengthAdjust="spacingAndGlyphs">: 0.0</text>
<text x="498.30" y="342.81" font-size="5.20" fill="#111" textLength="33.30" lengthAdjust="spacingAndGlyphs">FPS+InterFrame</text>
<text x="532.20" y="342.81" font-size="5.20" fill="#111" textLength="11.40" lengthAdjust="spacingAndGlyphs">: 60.0</text>
<text x="236.30" y="415.59" font-size="5.00" fill="#222" textLength="6.70" lengthAdjust="spacingAndGlyphs">FPS</text>
<text x="260.70" y="415.59" font-size="5.00" fill="#222" textLength="8.90" lengthAdjust="spacingAndGlyphs">Jank</text>
<text x="287.70" y="415.59" font-size="5.00" fill="#222" textLength="15.50" lengthAdjust="spacingAndGlyphs">BigJank</text>
<text x="321.20" y="415.59" font-size="5.00" fill="#222" textLength="14.40" lengthAdjust="spacingAndGlyphs">Stutter</text>
<text x="353.30" y="415.59" font-size="5.00" fill="#222" textLength="22.70" lengthAdjust="spacingAndGlyphs">InterFrame</text>
</svg>
</body></html>
